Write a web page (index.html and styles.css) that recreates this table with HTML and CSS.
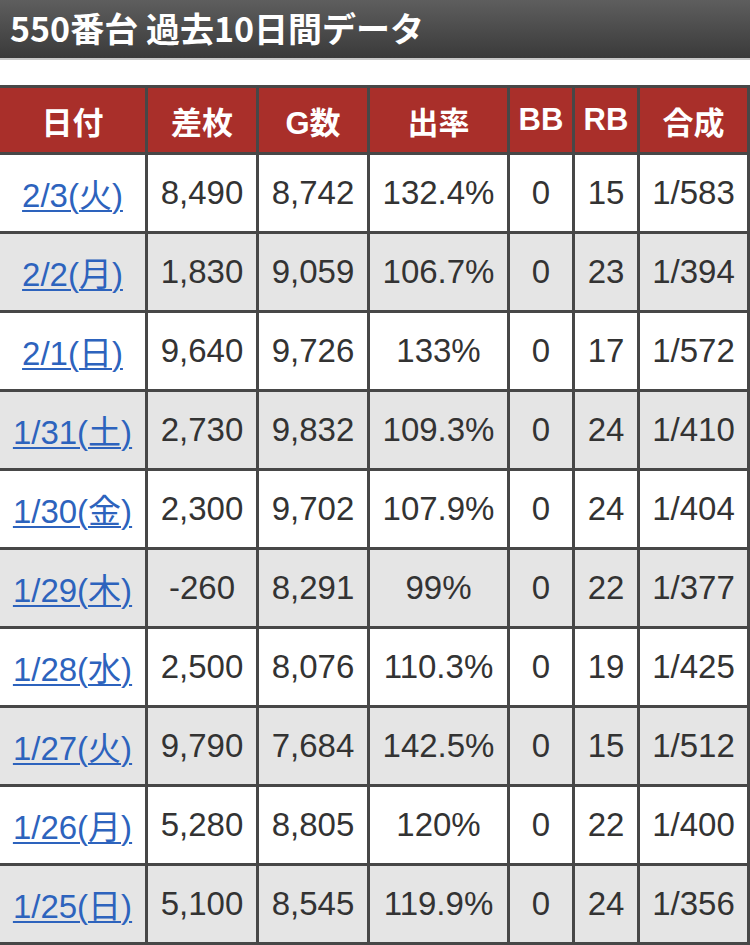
FILE: index.html
```html
<!DOCTYPE html>
<html lang="ja">
<head>
<meta charset="utf-8">
<title>550番台 過去10日間データ</title>
<link rel="stylesheet" href="styles.css">
</head>
<body>
<h1 class="title">550番台 過去10日間データ</h1>
<table class="data">
  <thead>
    <tr>
      <th class="c-date">日付</th>
      <th class="c-diff">差枚</th>
      <th class="c-games">G数</th>
      <th class="c-rate">出率</th>
      <th class="c-bb">BB</th>
      <th class="c-rb">RB</th>
      <th class="c-total">合成</th>
    </tr>
  </thead>
  <tbody>
    <tr><td><a href="#">2/3(火)</a></td><td>8,490</td><td>8,742</td><td>132.4%</td><td>0</td><td>15</td><td>1/583</td></tr>
    <tr><td><a href="#">2/2(月)</a></td><td>1,830</td><td>9,059</td><td>106.7%</td><td>0</td><td>23</td><td>1/394</td></tr>
    <tr><td><a href="#">2/1(日)</a></td><td>9,640</td><td>9,726</td><td>133%</td><td>0</td><td>17</td><td>1/572</td></tr>
    <tr><td><a href="#">1/31(土)</a></td><td>2,730</td><td>9,832</td><td>109.3%</td><td>0</td><td>24</td><td>1/410</td></tr>
    <tr><td><a href="#">1/30(金)</a></td><td>2,300</td><td>9,702</td><td>107.9%</td><td>0</td><td>24</td><td>1/404</td></tr>
    <tr><td><a href="#">1/29(木)</a></td><td>-260</td><td>8,291</td><td>99%</td><td>0</td><td>22</td><td>1/377</td></tr>
    <tr><td><a href="#">1/28(水)</a></td><td>2,500</td><td>8,076</td><td>110.3%</td><td>0</td><td>19</td><td>1/425</td></tr>
    <tr><td><a href="#">1/27(火)</a></td><td>9,790</td><td>7,684</td><td>142.5%</td><td>0</td><td>15</td><td>1/512</td></tr>
    <tr><td><a href="#">1/26(月)</a></td><td>5,280</td><td>8,805</td><td>120%</td><td>0</td><td>22</td><td>1/400</td></tr>
    <tr><td><a href="#">1/25(日)</a></td><td>5,100</td><td>8,545</td><td>119.9%</td><td>0</td><td>24</td><td>1/356</td></tr>
  </tbody>
</table>
</body>
</html>
```
FILE: styles.css
```css
html, body {
  margin: 0;
  padding: 0;
  background: #ffffff;
}
body {
  width: 750px;
  height: 945px;
  overflow: hidden;
  font-family: "Liberation Sans", "Noto Sans CJK JP", sans-serif;
}
.title {
  margin: 0;
  height: 60px;
  padding: 0 0 2px 10px;
  box-sizing: border-box;
  display: flex;
  align-items: center;
  background: linear-gradient(#5e5e5e, #3a3a3a);
  border-bottom: 2px solid #c8c8c8;
  color: #ffffff;
  font-family: "Noto Sans CJK JP", sans-serif;
  font-weight: 700;
  font-size: 34px;
  letter-spacing: 0;
  line-height: 1;
}
.data {
  margin-top: 25px;
  width: 750px;
  table-layout: fixed;
  border-collapse: separate;
  border-spacing: 0;
  border-top: 3px solid #474747;
}
.data th,
.data td {
  box-sizing: border-box;
  padding: 0;
  text-align: center;
  vertical-align: middle;
  border-right: 3px solid #474747;
  border-bottom: 3px solid #474747;
  white-space: nowrap;
}
.data th {
  height: 67px;
  background: #a92f2a;
  color: #ffffff;
  font-family: "Liberation Sans", "Noto Sans CJK JP", sans-serif;
  font-weight: 700;
  font-size: 31px;
}
.data td {
  height: 79px;
  color: #333333;
  font-size: 33px;
}
.data tbody tr:nth-child(even) td {
  background: #e5e5e5;
}
.data a {
  color: #2d63bd;
  text-decoration: underline;
  text-decoration-thickness: 2px;
  text-underline-offset: 3px;
}
.c-date { width: 148px; }
.c-diff { width: 111px; }
.c-games { width: 111px; }
.c-rate { width: 140px; }
.c-bb { width: 65px; }
.c-rb { width: 65px; }
.c-total { width: 110px; }
```
